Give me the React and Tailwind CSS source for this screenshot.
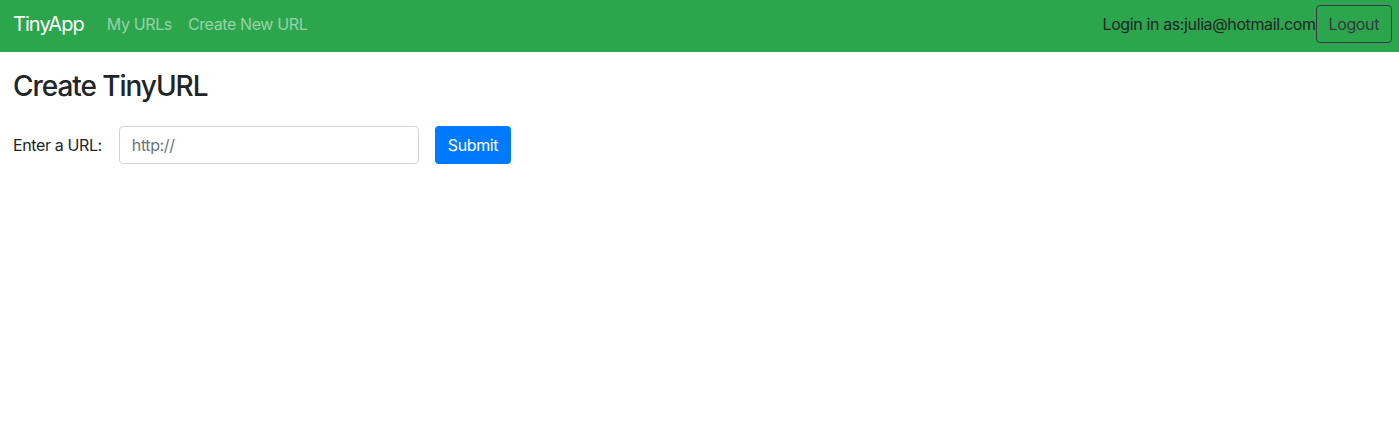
export default function App() {
  const font = { fontFamily: 'Inter, "Helvetica Neue", Arial, sans-serif' };
  return (
    <div className="min-h-[431px] bg-white text-[#212529] tracking-[-0.38px]" style={font}>
      <nav className="h-[52px] bg-[#2ca64d] flex items-center pl-[13px] pr-[7px] pb-[4px]">
        <span className="text-[20px] text-white mr-[23px] tracking-[-0.95px]">TinyApp</span>
        <a className="text-[16px] text-white/50 mr-[16px]">My URLs</a>
        <a className="text-[16px] text-white/50">Create New URL</a>
        <div className="ml-auto flex items-center">
          <span className="text-[16px] text-[#212529]">Login in as:julia@hotmail.com</span>
          <button className="h-[38px] px-[12px] border border-[#343a40] rounded-[4px] text-[16px] text-[#343a40] bg-transparent">
            Logout
          </button>
        </div>
      </nav>
      <main className="px-[13px]">
        <h3 className="text-[28px] font-medium mt-[18px] mb-[22px] leading-[1.2] tracking-[-1.05px]">Create TinyURL</h3>
        <form className="flex items-center">
          <label className="text-[16px] mr-[17px]">Enter a URL:</label>
          <input
            className="w-[300px] h-[38px] border border-[#ced4da] rounded-[4px] px-[12px] text-[16px] placeholder-[#6c757d] outline-none"
            placeholder="http://"
          />
          <button type="button" className="ml-[16px] h-[38px] px-[13px] bg-[#007bff] text-white rounded-[4px] text-[16px]">
            Submit
          </button>
        </form>
      </main>
    </div>
  );
}
